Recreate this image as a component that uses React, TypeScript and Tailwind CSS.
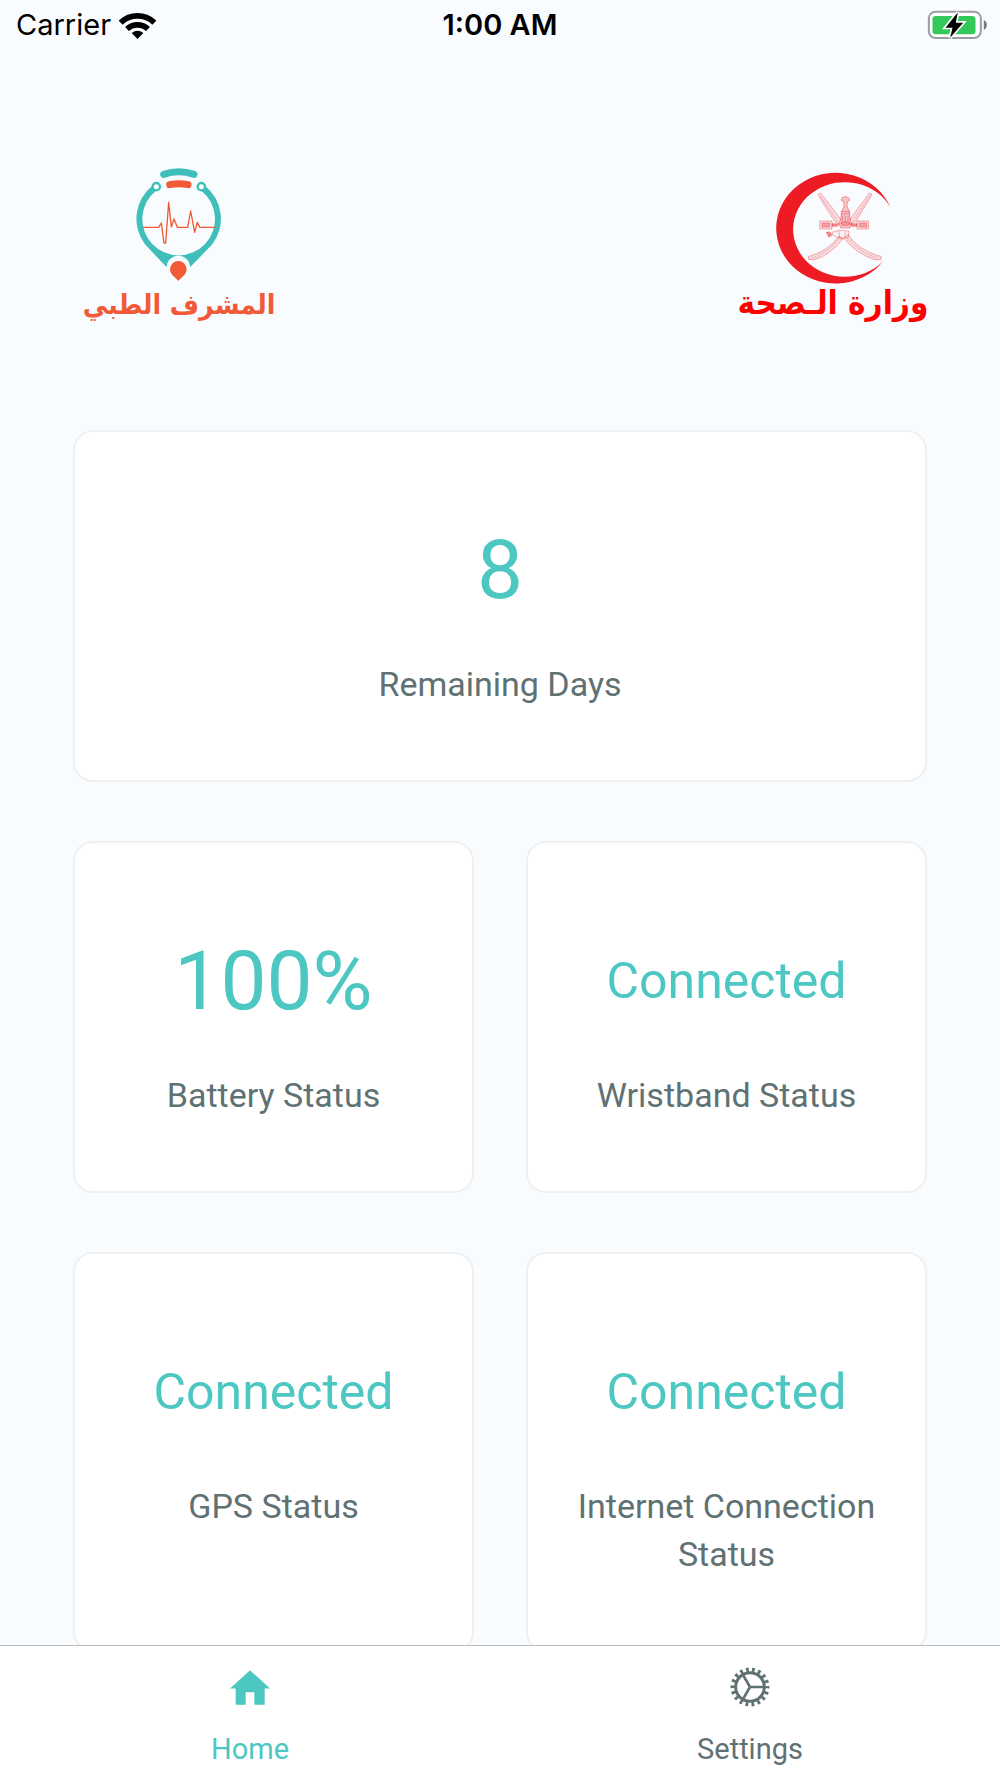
import React, { useState } from "react";

type Status = {
  label: string;
  value: string;
  size: "lg" | "sm";
  wide?: boolean;
};

const statuses: Status[] = [
  { label: "Remaining Days", value: "8", size: "lg", wide: true },
  { label: "Battery Status", value: "100%", size: "lg" },
  { label: "Wristband Status", value: "Connected", size: "sm" },
  { label: "GPS Status", value: "Connected", size: "sm" },
  { label: "Internet Connection Status", value: "Connected", size: "sm" },
];

function WifiIcon() {
  return (
    <svg viewBox="360 28 111 84" className="h-7 w-[37px]" aria-hidden="true">
      <g fill="none" stroke="#000" strokeWidth="17">
        <path d="M365 63A73 73 0 0 1 466 63" />
        <path d="M384 82A46 46 0 0 1 447 82" />
      </g>
      <path d="M415.500 112L398 94Q415.500 80 433 94Z" />
    </svg>
  );
}

function BatteryIcon() {
  return (
    <svg viewBox="82 27 182 90" className="h-[30px] w-[61px]" aria-hidden="true">
      <rect x="87" y="32" width="156" height="79" rx="20" fill="#fff" stroke="#9b9da0" strokeWidth="6" />
      <path d="M252 57Q261 62 261 72Q261 82 252 87Z" fill="#77797c" />
      <rect x="98" y="45" width="129" height="55" rx="10" fill="#34c759" />
      <path
        d="M174 34L137 80H158L151 110L190 65H168Z"
        fill="#000"
        stroke="#fff"
        strokeWidth="10"
        paintOrder="stroke"
      />
    </svg>
  );
}

function HomeIcon() {
  return (
    <svg viewBox="0 0 120 104" className="h-[35px] w-10" fill="currentColor" aria-hidden="true">
      <path d="M60 0L120 55H104V104H73V66H47V104H17V55H0Z" />
    </svg>
  );
}

function GearIcon() {
  return (
    <svg viewBox="-60 -60 120 120" className="size-10" fill="none" stroke="currentColor" aria-hidden="true">
      <circle r="43" strokeWidth="9" />
      {/* 18 teeth */}
      <circle r="51" strokeWidth="15" pathLength="180" strokeDasharray="4.500 5.500" strokeDashoffset="2.250" />
      <path d="M0 0H43M0 0L-21.500 -37.200M0 0L-21.500 37.200" strokeWidth="8" />
    </svg>
  );
}

function SupervisorLogo() {
  return (
    <svg viewBox="192 36 270 348" className="h-[116px] w-[90px]" aria-hidden="true">
      <path
        fill="#40bfba"
        d="M247 92A127 127 0 0 0 225 268L290 337A35 35 0 0 1 360 337L427 268A127 127 0 0 0 405 92L394 107A109 109 0 1 1 258 107Z"
      />
      <path d="M281 58Q326 43 372 58" fill="none" stroke="#40bfba" strokeWidth="21" strokeLinecap="round" />
      <path d="M299 89Q326 83 354 89" fill="none" stroke="#f15a36" strokeWidth="21" strokeLinecap="round" />
      <g fill="#fff" stroke="#40bfba" strokeWidth="7">
        <circle cx="259" cy="95" r="11" />
        <circle cx="394" cy="95" r="11" />
      </g>
      <path
        d="M219 217H266L274 204L282 264H287L296 142L304 216L312 192L322 217H353L362 168L374 232L382 202L390 217H436"
        fill="none"
        stroke="#f15a36"
        strokeWidth="4"
        strokeLinejoin="round"
      />
      <path d="M325 378C318 368 300 360 300 343A25 25 0 0 1 350 343C350 360 332 368 325 378Z" fill="#f15a36" />
    </svg>
  );
}

function MinistryLogo() {
  return (
    <svg viewBox="162 48 354 342" className="h-[114px] w-[118px]" aria-hidden="true">
      <path d="M512 158A178 166 0 1 0 490 318A155 142 0 1 1 512 158Z" fill="#ed1c24" />
      <g stroke="#ed1c24" strokeOpacity="0.5" strokeWidth="2" fill="#ed1c24" fillOpacity="0.14">
        {/* sheaths */}
        <path d="M294 118L302 114L318 134L362 192L358 204L344 199L304 136Z" />
        <path d="M456 118L448 114L434 134L390 192L394 204L408 199L446 136Z" />
        <path d="M301 124L352 197M449 124L400 197" strokeDasharray="4 3" />
        {/* blades */}
        <path d="M384 238Q412 284 484 305L483 314L464 314Q408 296 372 250Z" />
        <path d="M356 244Q328 286 265 305L266 314L284 314Q334 298 370 250Z" />
        <path d="M382 248Q418 292 474 309M354 254Q324 292 276 309" fill="none" strokeDasharray="4 3" />
        {/* belt */}
        <path d="M299 198H336V222H299ZM411 198H446V222H411Z" />
        <path d="M306 204H329V216H306ZM418 204H440V216H418Z" fillOpacity="0.3" />
        <path d="M336 206H358L352 214H336ZM411 206H390L396 214H411Z" fillOpacity="0.5" />
        {/* hilt and buckle */}
        <path d="M319 232L330 231L336 241L326 246Z" fillOpacity="0.5" />
        <path d="M336 232L356 226L387 228L385 246L362 252L338 240Z" fillOpacity="0.04" />
        <path d="M356 227L360 250M376 230L374 248" />
      </g>
      <g stroke="#ed1c24" strokeOpacity="0.6" strokeWidth="2" fill="#ed1c24" fillOpacity="0.25">
        <path d="M363 136Q364 125 376 125Q388 125 389 136L382 140L381 155L388 168L391 197L385 211H367L362 197L365 168L372 155L371 140Z" />
        <path d="M363 170H390M362 177H390M358 206L376 200L395 206L390 219H362Z" />
        <path d="M368 182V202M376 182V202M384 182V202" />
      </g>
    </svg>
  );
}

function StatusCard({ label, value, size, wide }: Status) {
  return (
    <section
      className={`flex flex-col items-center gap-6 rounded-[20px] border-2 border-[#f0f0f0] bg-white px-8 py-18 text-center ${
        wide ? "col-span-2" : ""
      }`}
    >
      <p
        className={`leading-[132px] text-[#4dc7c1] ${
          size === "lg" ? "text-[82px]" : "text-[50px]"
        }`}
      >
        {value}
      </p>
      <h2 className="text-[34px] leading-12 text-[#607173]">{label}</h2>
    </section>
  );
}

export default function App() {
  const [tab, setTab] = useState("home");

  const tabClass = (name: string) =>
    `flex flex-1 flex-col items-center gap-5 pt-[17px] text-[29px] leading-9 ${
      tab === name ? "text-[#4dc7c1]" : "text-[#607173]"
    }`;

  return (
    <div className="flex h-screen flex-col bg-[#f9fcff] font-['Roboto',sans-serif]">
      {/* Status bar */}
      <header className="grid h-[50px] shrink-0 grid-cols-[1fr_auto_1fr] items-center px-3 font-['Inter',sans-serif] text-[29px] leading-9 text-black">
        <div className="flex items-center gap-2 pl-1">
          <span>Carrier</span>
          <WifiIcon />
        </div>
        <span className="font-semibold">1:00 AM</span>
        <div className="flex justify-end">
          <BatteryIcon />
        </div>
      </header>

      <main className="min-h-0 flex-1 overflow-y-auto [scrollbar-width:none]">
        <div className="flex items-start justify-between pt-[117px] pr-[68px] pb-[103px] pl-20 font-['DejaVu_Sans_Condensed','DejaVu_Sans',sans-serif] font-bold whitespace-nowrap">
          <div className="flex w-[198px] flex-col items-center">
            <SupervisorLogo />
            <span lang="ar" dir="rtl" className="text-[28px] leading-11 text-[#f15a36]">
              المشرف الطبي
            </span>
          </div>
          <div className="flex w-[198px] flex-col items-center pt-1">
            <MinistryLogo />
            <span lang="ar" dir="rtl" className="text-[33px] leading-9 text-[#ff0000]">
              وزارة الـصحة
            </span>
          </div>
        </div>

        <div className="grid grid-cols-2 gap-x-[52px] gap-y-[59px] px-[73px] pb-14">
          {statuses.map((status) => (
            <StatusCard key={status.label} {...status} />
          ))}
        </div>
      </main>

      {/* Bottom tabs */}
      <nav className="flex h-[133px] shrink-0 border-t border-[#bcbcbc] bg-white">
        <button type="button" className={tabClass("home")} onClick={() => setTab("home")}>
          <span className="flex h-12 items-center">
            <HomeIcon />
          </span>
          Home
        </button>
        <button type="button" className={tabClass("settings")} onClick={() => setTab("settings")}>
          <span className="flex h-12 items-center">
            <GearIcon />
          </span>
          Settings
        </button>
      </nav>
    </div>
  );
}
